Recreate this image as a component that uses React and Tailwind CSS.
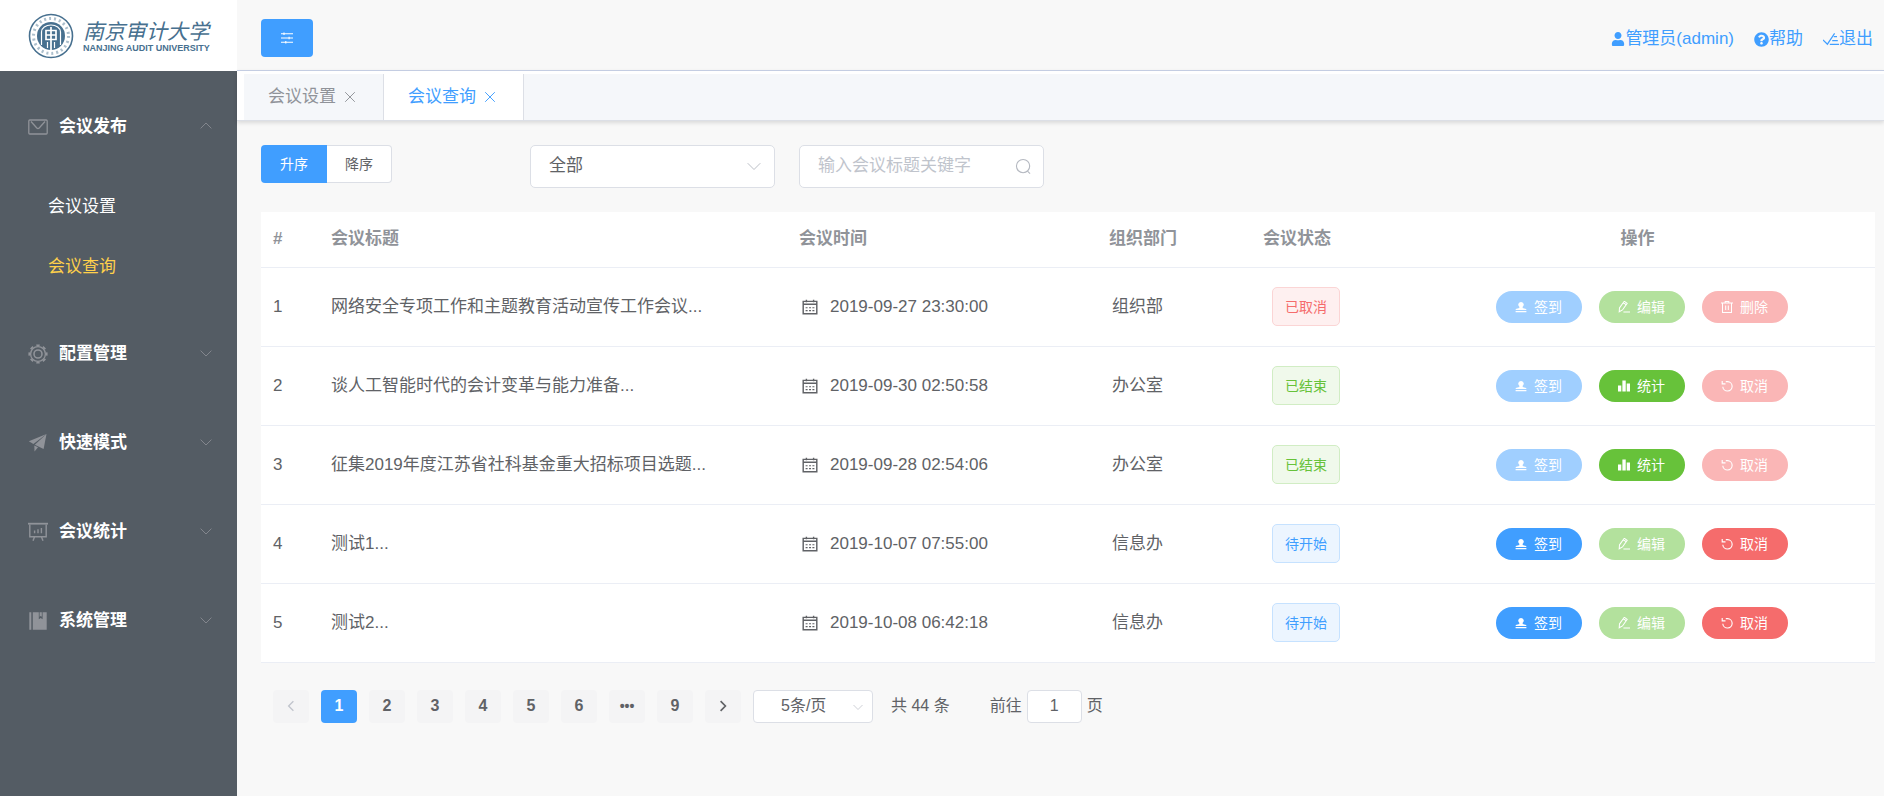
import { FaUser, FaQuestionCircle } from 'react-icons/fa';

const NAV = [
  {
    label: '会议发布',
    icon: 'mail',
    open: true,
    children: [{ label: '会议设置' }, { label: '会议查询', active: true }],
  },
  { label: '配置管理', icon: 'gear' },
  { label: '快速模式', icon: 'plane' },
  { label: '会议统计', icon: 'board' },
  { label: '系统管理', icon: 'book' },
];

const TABS = [{ label: '会议设置' }, { label: '会议查询', active: true }];

const MEETINGS = [
  { id: 1, title: '网络安全专项工作和主题教育活动宣传工作会议...', time: '2019-09-27 23:30:00', dept: '组织部', status: 'canceled', actions: [['sign', false], ['edit', false], ['remove', false]] },
  { id: 2, title: '谈人工智能时代的会计变革与能力准备...', time: '2019-09-30 02:50:58', dept: '办公室', status: 'finished', actions: [['sign', false], ['stats', true], ['cancel', false]] },
  { id: 3, title: '征集2019年度江苏省社科基金重大招标项目选题...', time: '2019-09-28 02:54:06', dept: '办公室', status: 'finished', actions: [['sign', false], ['stats', true], ['cancel', false]] },
  { id: 4, title: '测试1...', time: '2019-10-07 07:55:00', dept: '信息办', status: 'pending', actions: [['sign', true], ['edit', false], ['cancel', true]] },
  { id: 5, title: '测试2...', time: '2019-10-08 06:42:18', dept: '信息办', status: 'pending', actions: [['sign', true], ['edit', false], ['cancel', true]] },
];

const STATUS = {
  canceled: { label: '已取消', style: 'bg-[#fef0f0] border-[#fbd5d5] text-[#f56c6c]' },
  finished: { label: '已结束', style: 'bg-[#f0f9eb] border-[#d1edc4] text-[#67c23a]' },
  pending: { label: '待开始', style: 'bg-[#ecf5ff] border-[#c6e2ff] text-[#409eff]' },
};

const ACTIONS = {
  sign: { label: '签到', icon: 'stamp', on: 'bg-[#409eff]', off: 'bg-[#a0cfff]' },
  edit: { label: '编辑', icon: 'pen', on: 'bg-[#67c23a]', off: 'bg-[#b3e19d]' },
  stats: { label: '统计', icon: 'bars', on: 'bg-[#67c23a]', off: 'bg-[#b3e19d]' },
  remove: { label: '删除', icon: 'trash', on: 'bg-[#f56c6c]', off: 'bg-[#fab6b6]' },
  cancel: { label: '取消', icon: 'undo', on: 'bg-[#f56c6c]', off: 'bg-[#fab6b6]' },
};

const PAGES = ['1', '2', '3', '4', '5', '6', '•••', '9'];

// All glyphs share a 20x20 grid
const GLYPHS = {
  mail: (
    <>
      <rect x="0.8" y="3" width="18.4" height="14" rx="1" />
      <path d="M3 4.5 8.8 11q1.2 1 2.4 0L17 4.5" />
    </>
  ),
  gear: (
    <>
      <circle cx="10" cy="10" r="7.4" />
      <circle cx="10" cy="10" r="8.7" strokeWidth="1.8" pathLength="16" strokeDasharray="1 1" strokeDashoffset="0.5" />
      <circle cx="10" cy="10" r="4" strokeWidth="1.6" />
    </>
  ),
  plane: (
    <g fill="currentColor" stroke="none">
      <path d="M18.5 1 .8 8.3 5.4 11z" />
      <path d="M18.5 1 6.8 11.8l8.8 4.2z" />
      <path d="M6.3 12.6 10 14.3 6.5 18.6z" />
    </g>
  ),
  board: (
    <>
      <path d="M0 1.7h20" strokeWidth="1.8" />
      <path d="M1.8 2.5v12.3h16.4V2.5M6.5 15 5 18.8M13.5 15l1.5 3.8M6.6 11.3V8.6M10 11.3V7.3M13.4 11.3V6" strokeWidth="1.4" />
    </>
  ),
  book: (
    <path
      d="M1.3 1.3h2v17.4h-2zM4.8 1.3h6v7l1.9-1.3 1.9 1.3v-7h4.1v17.4H4.8zM11.6 1.3h2.2v4.4l-1.1-.8-1.1.8z"
      fill="currentColor"
      stroke="none"
    />
  ),
  up: <path d="m1 14 9-9 9 9" />,
  down: <path d="m1 6 9 9 9-9" />,
  left: <path d="m14 2-8 8 8 8" strokeWidth="2.2" />,
  right: <path d="m6 2 8 8-8 8" strokeWidth="2.8" />,
  close: <path d="m2 2 16 16M18 2 2 18" strokeWidth="1.6" />,
  sliders: <path d="M0 3h20M0 10h20M0 17h20M5 1v4M13.5 8v4M8 15v4" strokeWidth="1.9" />,
  search: (
    <>
      <circle cx="9.5" cy="9.5" r="7.8" />
      <path d="m14.7 15.5 3 3" />
    </>
  ),
  calendar: (
    <>
      <path d="M1.5 3h17v15.5h-17zM5.5.8v3.4M14.5.8v3.4M1.5 6.6h17" strokeWidth="1.8" />
      <path d="M4.5 11H7M8.8 11h2.5M13 11h2.5M4.5 14.5H7M8.8 14.5h2.5M13 14.5h2.5" strokeWidth="1.4" />
    </>
  ),
  exit: <path d="m0 11 5.5 5.5L14.5 3M13.5 7h4M11.5 12h7M8.5 16.8H20" strokeWidth="1.5" />,
  stamp: (
    <path
      d="M10 1.5a4.6 4.6 0 0 1 2.8 8.2v2.1l6 1.7v1.3H1.2v-1.3l6-1.7V9.7A4.6 4.6 0 0 1 10 1.5zM1 16.6h18v2H1z"
      fill="currentColor"
      stroke="none"
    />
  ),
  pen: <path d="m2.5 11.5 8-11 4.8 3.4-7.8 11-5.5 3zM8.8 2.8l4.8 3.4M9 18.5h11" strokeWidth="1.7" />,
  bars: <path d="M0 9h5.5v10H0zM7.3 1h5.6v18H7.3zM14.5 6H20v13h-5.5z" fill="currentColor" stroke="none" />,
  trash: <path d="M0 3.5h20M2.5 3.5V19h15V3.5M7 3V1h6v2M7.8 7.5V15M12.2 7.5V15" strokeWidth="1.7" />,
  undo: <path d="M2 1.5v5h5.5M8 2.8h3a7.8 7.8 0 1 1-8 8.5" strokeWidth="1.9" />,
};

function Icon({ name, className }) {
  return (
    <svg
      viewBox="0 0 20 20"
      fill="none"
      stroke="currentColor"
      strokeWidth="1.3"
      aria-hidden="true"
      className={`shrink-0 ${className}`}
    >
      {GLYPHS[name]}
    </svg>
  );
}

function Logo() {
  return (
    <div className="flex h-[71px] items-center gap-[9px] bg-white pl-7 text-[#47708f]">
      <svg viewBox="0 0 46 46" fill="none" stroke="currentColor" className="h-[46px] w-[46px] shrink-0" aria-hidden="true">
        <circle cx="23" cy="23" r="21.5" strokeWidth="1.6" />
        <circle cx="23" cy="23" r="17.5" strokeWidth="3" strokeDasharray="2 3" opacity="0.45" />
        <circle cx="23" cy="23" r="14" fill="currentColor" stroke="none" />
        <g stroke="#fff">
          <path d="M13.5 32V19a9.5 7 0 0 1 19 0v13" strokeWidth="1.2" />
          <path d="M18 17.5h10v9H18zM18 22h10M23 14v24" strokeWidth="1.7" />
          <path d="M19.5 29v6M26.5 29v6" strokeWidth="1.2" />
        </g>
      </svg>
      <div className="flex flex-col">
        <span className="font-['Noto_Sans_CJK_SC',sans-serif] text-[21px] leading-6 italic">南京审计大学</span>
        <span className="text-[9px] leading-3 font-bold whitespace-nowrap">NANJING AUDIT UNIVERSITY</span>
      </div>
    </div>
  );
}

function Sidebar() {
  return (
    <aside className="flex w-[237px] shrink-0 flex-col bg-[#545c64]">
      <Logo />
      <nav className="flex flex-col pt-[11px]">
        {NAV.map((item) => (
          <div key={item.label}>
            <button type="button" className="flex h-[89px] w-full items-center pr-6 pl-7 text-white">
              <Icon name={item.icon} className="h-5 w-5 text-[#909399]" />
              <span className="ml-[11px] font-bold">{item.label}</span>
              <Icon name={item.open ? 'up' : 'down'} className="mr-px mb-0.5 ml-auto h-3 w-3 text-[#909399]" />
            </button>
            {item.children && (
              <ul className="pt-1.5 pb-3">
                {item.children.map((child) => (
                  <li key={child.label}>
                    <a
                      href="#"
                      className={`flex h-[60px] items-center pl-12 ${child.active ? 'text-[#ffd04b]' : 'text-white'}`}
                    >
                      {child.label}
                    </a>
                  </li>
                ))}
              </ul>
            )}
          </div>
        ))}
      </nav>
    </aside>
  );
}

function Header() {
  return (
    <header className="flex h-[70px] items-center justify-between pr-[11px] pl-6">
      <button
        type="button"
        aria-label="折叠菜单"
        className="mt-1.5 flex h-[38px] w-[52px] items-center justify-center rounded bg-[#409eff] text-white"
      >
        <Icon name="sliders" className="h-3 w-3" />
      </button>
      <div className="mt-2 flex items-center gap-5 text-[#409eff]">
        <a href="#" className="flex items-center">
          <FaUser size={14} />
          管理员(admin)
        </a>
        <a href="#" className="flex items-center">
          <FaQuestionCircle size={15} />
          帮助
        </a>
        <a href="#" className="flex items-center">
          <Icon name="exit" className="h-4 w-4" />
          退出
        </a>
      </div>
    </header>
  );
}

function TabBar() {
  return (
    <div className="border-y border-[#dcdfe6] border-t-[#c4cde2] bg-white pt-[3px] pl-[7px] shadow-[0_2px_4px_rgba(0,0,0,0.12)]">
      <div className="flex h-[46px] bg-[#f5f7fa]">
        {TABS.map((tab) => (
          <div
            key={tab.label}
            className={`flex w-[140px] items-center gap-2 border-r border-[#dcdfe6] pl-6 ${
              tab.active ? 'bg-white text-[#409eff]' : 'text-[#909399]'
            }`}
          >
            <button type="button">{tab.label}</button>
            <button type="button" aria-label={`关闭${tab.label}`}>
              <Icon name="close" className="h-3 w-3" />
            </button>
          </div>
        ))}
      </div>
    </div>
  );
}

function Filters() {
  return (
    <div className="flex items-start">
      <div className="flex h-[38px] w-[131px] text-sm">
        <button type="button" className="w-[66px] rounded-l bg-[#409eff] text-white">升序</button>
        <button type="button" className="flex-1 rounded-r border border-l-0 border-[#dcdfe6] bg-white">降序</button>
      </div>
      <div className="relative ml-[138px] w-[245px]">
        <select
          aria-label="会议状态"
          className="h-[43px] w-full appearance-none rounded-[5px] border border-[#dcdfe6] bg-white pr-9 pb-0.5 pl-[18px]"
        >
          <option>全部</option>
        </select>
        <Icon name="down" className="pointer-events-none absolute top-[14px] right-[14px] h-[14px] w-[14px] text-[#b4b8c0]" />
      </div>
      <div className="relative ml-6 w-[245px]">
        <input
          type="text"
          aria-label="会议标题关键字"
          placeholder="输入会议标题关键字"
          className="h-[43px] w-full rounded-[5px] border border-[#dcdfe6] bg-white pr-9 pb-0.5 pl-[18px] placeholder:text-[#c0c4cc]"
        />
        <Icon name="search" className="pointer-events-none absolute top-[13px] right-3 h-[17px] w-[17px] text-[#b4b8c0]" />
      </div>
    </div>
  );
}

function ActionButton({ type, enabled }) {
  const action = ACTIONS[type];
  return (
    <button
      type="button"
      disabled={!enabled}
      className={`flex h-8 w-[86px] items-center justify-center gap-[7px] rounded-full text-sm text-white ${
        enabled ? action.on : action.off
      }`}
    >
      <Icon name={action.icon} className="h-3 w-3" />
      {action.label}
    </button>
  );
}

function MeetingTable() {
  return (
    <table className="mt-6 w-full table-fixed bg-white text-left">
      <colgroup>
        <col className="w-[58px]" />
        <col className="w-[468px]" />
        <col className="w-[310px]" />
        <col className="w-[154px]" />
        <col className="w-[149px]" />
        <col />
      </colgroup>
      <thead>
        <tr className="h-[55px] border-b border-[#ebeef5] text-[#909399]">
          <th className="pl-3">#</th>
          <th className="pl-3">会议标题</th>
          <th className="pl-3">会议时间</th>
          <th className="pl-3">组织部门</th>
          <th className="pl-3">会议状态</th>
          <th className="text-center">操作</th>
        </tr>
      </thead>
      <tbody>
        {MEETINGS.map((row) => (
          <tr key={row.id} className="h-[79px] border-b border-[#ebeef5]">
            <td className="pl-3">{row.id}</td>
            <td className="pl-3">{row.title}</td>
            <td className="pl-[15px]">
              <div className="flex items-center gap-3">
                <Icon name="calendar" className="h-4 w-4" />
                {row.time}
              </div>
            </td>
            <td className="pl-[15px]">{row.dept}</td>
            <td className="pl-[21px]">
              <span className={`flex h-[39px] w-[68px] items-center justify-center rounded-[5px] border text-sm ${STATUS[row.status].style}`}>
                {STATUS[row.status].label}
              </span>
            </td>
            <td>
              <div className="flex justify-center gap-[17px] pl-2">
                {row.actions.map(([type, enabled]) => (
                  <ActionButton key={type} type={type} enabled={enabled} />
                ))}
              </div>
            </td>
          </tr>
        ))}
      </tbody>
    </table>
  );
}

function Pagination() {
  return (
    <div className="mt-[27px] flex items-center pl-3 text-base">
      <div className="flex gap-3 font-bold">
        <button type="button" disabled aria-label="上一页" className="flex h-[33px] w-9 items-center justify-center rounded-sm bg-[#f4f4f5] text-[#c0c4cc]">
          <Icon name="left" className="h-3 w-3" />
        </button>
        {PAGES.map((page) => (
          <button
            key={page}
            type="button"
            className={`h-[33px] w-9 rounded-sm ${page === '1' ? 'bg-[#409eff] text-white' : 'bg-[#f4f4f5]'} ${
              page === '•••' ? 'text-sm' : ''
            }`}
          >
            {page}
          </button>
        ))}
        <button type="button" aria-label="下一页" className="flex h-[33px] w-9 items-center justify-center rounded-sm bg-[#f4f4f5]">
          <Icon name="right" className="h-3 w-3" />
        </button>
      </div>
      <div className="relative ml-3 w-[120px]">
        <select
          aria-label="每页条数"
          className="h-[33px] w-full appearance-none rounded border border-[#dcdfe6] bg-white pl-[27px]"
        >
          <option>5条/页</option>
        </select>
        <Icon name="down" className="pointer-events-none absolute top-3 right-2.5 h-2.5 w-2.5 text-[#b4b8c0]" />
      </div>
      <span className="ml-[18px]">共 44 条</span>
      <label className="ml-10 flex items-center gap-[5px]">
        前往
        <input type="text" defaultValue="1" className="h-[33px] w-[55px] rounded border border-[#dcdfe6] bg-white text-center" />
        页
      </label>
    </div>
  );
}

export default function App() {
  return (
    <div className="flex min-h-screen bg-[#f8f8f8] font-['Liberation_Sans','Noto_Sans_CJK_SC',sans-serif] text-[17px] leading-6 text-[#606266]">
      <Sidebar />
      <div className="min-w-0 flex-1">
        <Header />
        <TabBar />
        <main className="pt-6 pr-[9px] pl-6">
          <Filters />
          <MeetingTable />
          <Pagination />
        </main>
      </div>
    </div>
  );
}
